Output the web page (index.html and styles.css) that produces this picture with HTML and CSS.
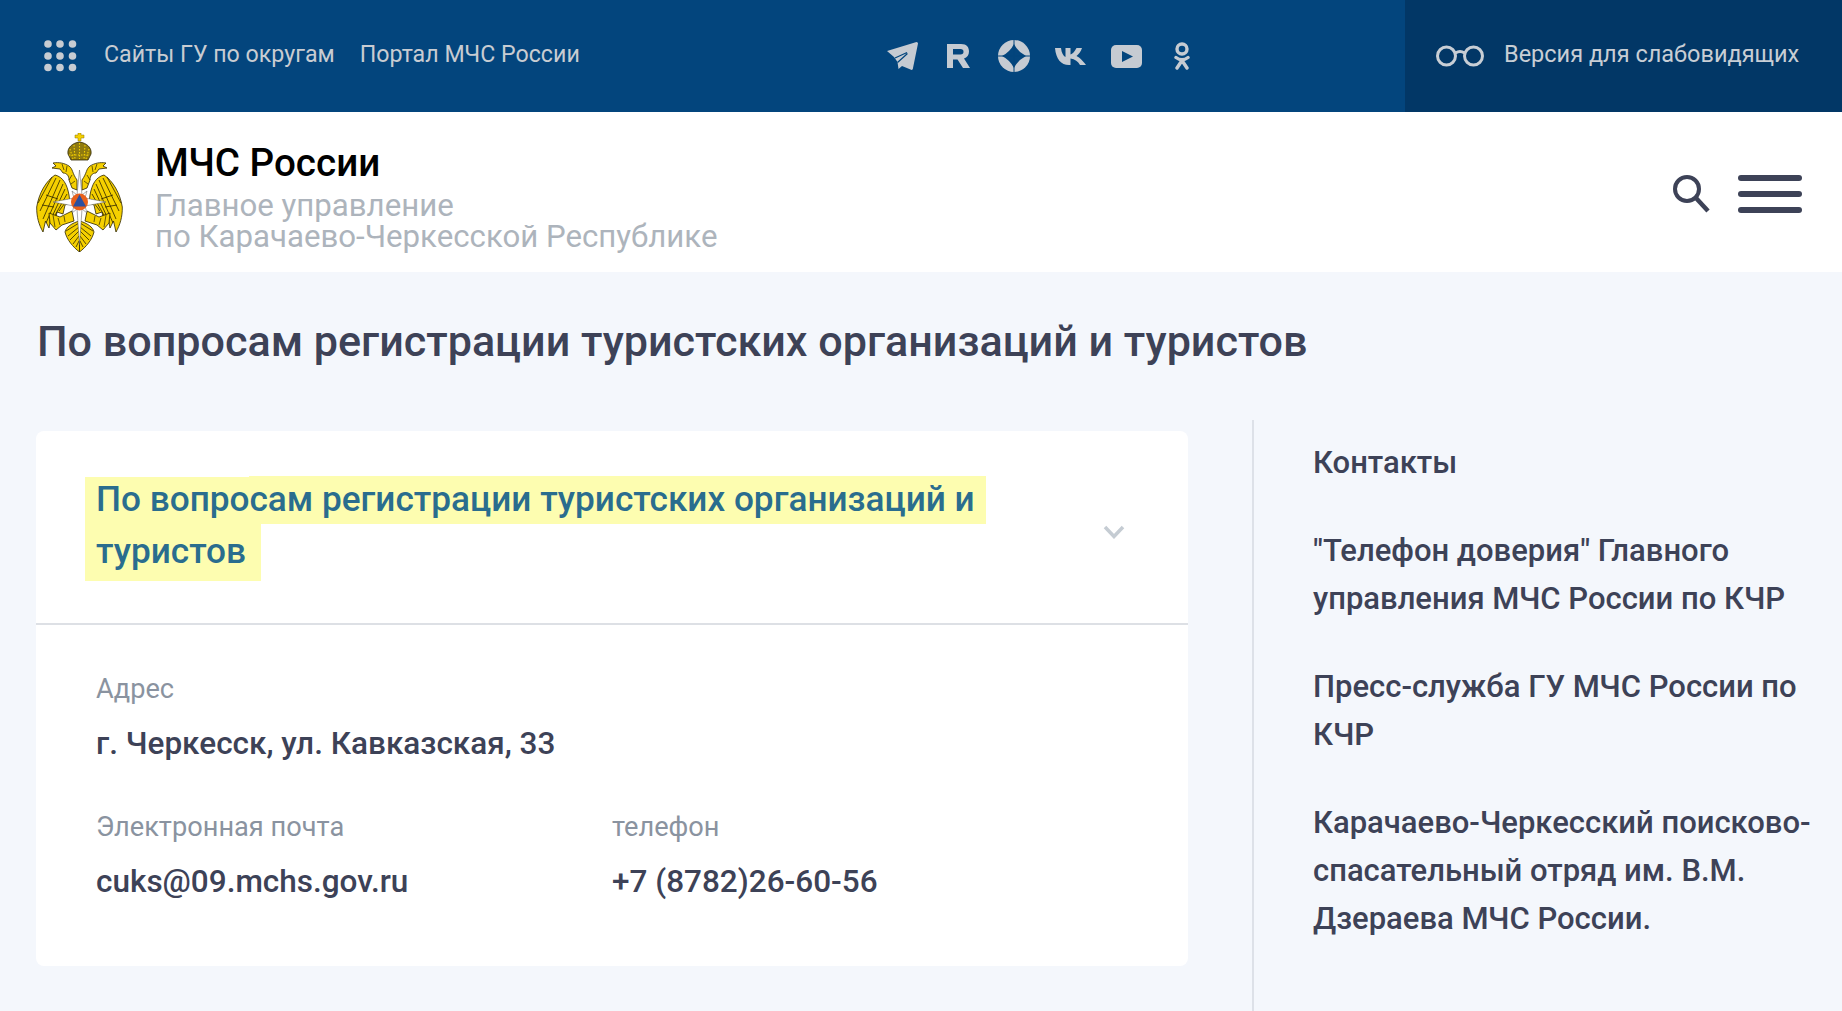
FILE: index.html
```html
<!DOCTYPE html>
<html lang="ru">
<head>
<meta charset="utf-8">
<title>По вопросам регистрации туристских организаций и туристов</title>
<link rel="stylesheet" href="styles.css">
</head>
<body>
<div class="topbar">
  <div class="topnav">
    <svg class="ico-dots" width="33" height="32" viewBox="0 0 33 32" fill="#c8ccd2"><circle cx="4" cy="4" r="3.8"/><circle cx="16" cy="4" r="3.8"/><circle cx="28.500" cy="4" r="3.800"/><circle cx="4" cy="16" r="3.8"/><circle cx="16" cy="16" r="3.8"/><circle cx="28.500" cy="16" r="3.800"/><circle cx="4" cy="27.500" r="3.800"/><circle cx="16" cy="27.500" r="3.800"/><circle cx="28.500" cy="27.500" r="3.800"/></svg>
    <a class="toplink">Сайты ГУ по округам</a>
    <a class="toplink">Портал МЧС России</a>
  </div>
  <div class="socials">
    <span class="social"><svg width="32" height="28" viewBox="0 0 32 28"><path fill="#c6cbd2" d="M1 9 30.500 0Q32 0 32 1.500L26.800 27Q26 28.500 24.500 27.500L16 24 12.500 27 11.500 20 8 15Z"/><path fill="none" stroke="#03457d" stroke-width="1.200" d="M21 10.500 9 16M21.500 11.500 11.500 20.500"/></svg></span>
    <span class="social"><svg width="23" height="24" viewBox="0 0 23 24"><path fill="#c6cbd2" fill-rule="evenodd" d="M0 0H14C20 0 22 3.500 22 7.500 22 11 20 13.500 17 14.500L23 24H16L10.500 15.500H6V24H0ZM6 5V10.500H13.500C15.500 10.500 16.500 9.500 16.500 7.700 16.500 6 15.500 5 13.500 5Z"/></svg></span>
    <span class="social"><svg width="32" height="32" viewBox="0 0 32 32"><circle cx="16" cy="16" r="16" fill="#c6cbd2"/><path fill="#03457d" d="M16 4Q20 12 28 16 20 20 16 28 12 20 4 16 12 12 16 4Z"/><path stroke="#03457d" d="M16 0V32M0 16H32"/></svg></span>
    <span class="social"><svg width="31" height="17" viewBox="0 0 31 17"><path fill="#c6cbd2" d="M0 0H6C6.500 5 8.500 8 10.500 9V0H15.500V6.500C17.500 6 19.500 3.500 21.500 0H27C26 3.500 23.500 6.500 21.500 8 23.500 9 27 11.500 31 17H25C23 13.500 20 11 15.500 10.500V17H14C6 17 1 11 0 0Z"/></svg></span>
    <span class="social"><svg width="31" height="23" viewBox="0 0 31 23"><rect width="31" height="23" rx="5" fill="#c6cbd2"/><path fill="#03457d" d="M11 6 22 11.500 11 17Z"/></svg></span>
    <span class="social"><svg width="16" height="28" viewBox="0 0 16 28" fill="none" stroke="#c6cbd2" stroke-width="3.400" stroke-linecap="round"><circle cx="8" cy="7" r="5"/><path d="M2 15.500Q8 20 14 15.500M8 18.500 3 26M8 18.500 13 26"/></svg></span>
  </div>
  <div class="vision">
    <svg width="48" height="22" viewBox="0 0 48 22" fill="none" stroke="#c8ced5" stroke-width="3"><circle cx="10.500" cy="11" r="9"/><circle cx="37.500" cy="11" r="9"/><path d="M19.500 8Q24 5 28.500 8"/></svg>
    <span class="vision-text">Версия для слабовидящих</span>
  </div>
</div>

<header class="header">
  <div class="brand">
    <svg class="emblem" width="88" height="119" viewBox="0 0 88 119">
      <defs>
        <g id="half">
          <path fill="#f5d000" stroke="#2e2600" stroke-width=".8" d="M33 62C31 51 27 44 19 42 10 48 3 60 .7 74 .5 84 3 92 7 99L9.500 88 13 95 15 84 19 90 21 79 27 81 29 72 34 70Z"/>
          <path fill="none" stroke="#2e2600" stroke-width=".8" d="M16 44 2 70M20 45 4 78M24 47 7 86M27 51 10 90M29 56 14 88M31 61 18 84M32 66 23 78M10 62 22 66M6 72 18 74"/>
          <path fill="#f5d000" stroke="#2e2600" stroke-width=".8" d="M41 47C36 40 37 36 33 33 28 30 23 29 17 30L20 33 16 35 24 36 27 40C31 40 33 43 33 47L36 55 41 57Z"/>
          <path fill="none" stroke="#2e2600" stroke-width=".7" d="M26 31 28 37M31 33 30 39M36 42 33 47M39 48 35 51"/>
          <path fill="#f5d000" stroke="#2e2600" stroke-width=".8" d="M36 78 24 84 13 80 14 90 20 97 26 92 38 88Z"/>
          <path fill="none" stroke="#2e2600" stroke-width=".7" d="M17 82 19 94M22 85 24 92M28 83 29 89"/>
          <path fill="#f5d000" stroke="#2e2600" stroke-width=".8" d="M43.500 88C36 90 30 94 29 99 31 107 37 114 43.500 119Z"/>
          <path fill="none" stroke="#2e2600" stroke-width=".8" d="M43 90 30 98M43 94 32 103M43 98 34 107M43 103 37 111M43 108 40 114"/>
        </g>
      </defs>
      <use href="#half"/>
      <use href="#half" transform="matrix(-1 0 0 1 87 0)"/>
      <path fill="#f5d000" stroke="#8a7300" stroke-width=".5" d="M42 0H45V2H48V5H45V8H42V5H39V2H42Z"/>
      <path fill="#8f7a10" stroke="#2e2600" stroke-width=".8" d="M43.500 9C36 10 31 15 32 21L35 27H52L55 21C56 15 51 10 43.500 9Z"/>
      <path fill="none" stroke="#f5d000" stroke-width="1.100" stroke-dasharray="1.500 1.500" d="M43.500 10V26M38 12 39 26M49 12 48 26M34 16 37 26M53 16 50 26M33 22H54"/>
      <path fill="#fff" stroke="#555" stroke-width=".5" d="M43.500 37 46 62 51 58 49 65 70 69 49 73 51 80 46 76 43.500 112 41 76 36 80 38 73 17 69 38 65 36 58 41 62Z"/>
      <circle cx="43.500" cy="69" r="8.500" fill="#e8601a"/>
      <path fill="#2a4fa0" d="M43.500 61.500 50 73.500H37Z"/>
    </svg>
    <div class="brand-text">
      <div class="brand-name">МЧС России</div>
      <div class="brand-sub">Главное управление<br>по Карачаево-Черкесской Республике</div>
    </div>
  </div>
  <div class="tools">
    <svg width="37" height="38" viewBox="0 0 37 38" fill="none" stroke="#3d4257"><circle cx="14" cy="14" r="12" stroke-width="4"/><path stroke-width="4.500" d="M23 23 35 36"/></svg>
    <div class="burger"><span></span><span></span><span></span></div>
  </div>
</header>

<main class="main">
  <h1 class="page-title">По вопросам регистрации туристских организаций и туристов</h1>
  <div class="columns">
    <section class="card">
      <div class="card-head">
        <div class="card-title">
          <span class="hl hl-first">По вопросам регистрации туристских организаций и</span>
          <span class="hl hl-second">туристов</span>
        </div>
        <svg class="chevron" width="22" height="14" viewBox="0 0 22 14" fill="none" stroke="#c5ccd3" stroke-width="3.500"><path d="M2 2 11 11.500 20 2"/></svg>
      </div>
      <div class="card-body">
        <div class="field">
          <div class="label">Адрес</div>
          <div class="value">г. Черкесск, ул. Кавказская, 33</div>
        </div>
        <div class="field-row">
          <div class="field">
            <div class="label">Электронная почта</div>
            <div class="value">cuks@09.mchs.gov.ru</div>
          </div>
          <div class="field">
            <div class="label">телефон</div>
            <div class="value">+7 (8782)26-60-56</div>
          </div>
        </div>
      </div>
    </section>
    <nav class="side">
      <a class="side-link">Контакты</a>
      <a class="side-link">"Телефон доверия" Главного управления МЧС России по КЧР</a>
      <a class="side-link">Пресс-служба ГУ МЧС России по КЧР</a>
      <a class="side-link">Карачаево-Черкесский поисково-спасательный отряд им. В.М. Дзераева МЧС России.</a>
    </nav>
  </div>
</main>
</body>
</html>
```
FILE: styles.css
```css
* { box-sizing: border-box; }
html, body { margin: 0; padding: 0; }
body {
  font-family: Roboto, "Liberation Sans", sans-serif;
  background: #f4f7fc;
  color: #3d4257;
  overflow: hidden;
  height: 1011px;
}
.topbar {
  height: 112px;
  background: #03457d;
  display: flex;
  align-items: center;
}
.topnav {
  display: flex;
  align-items: center;
  padding-left: 44px;
  width: 874px;
  flex: none;
}
.ico-dots { margin-right: 27px; flex: none; }
.toplink {
  font-size: 23.200px;
  line-height: 32px;
  color: #c8ccd2;
  margin-right: 25px;
  margin-bottom: 4px;
  white-space: nowrap;
}
.socials {
  display: flex;
  align-items: center;
  flex: none;
  width: 531px;
  height: 112px;
}
.social {
  width: 56px;
  display: flex;
  align-items: center;
  justify-content: center;
}
.vision {
  flex: 1;
  height: 112px;
  background: #023766;
  display: flex;
  align-items: center;
  padding-left: 31px;
  gap: 20px;
}
.vision-text {
  font-size: 23.500px;
  line-height: 32px;
  margin-bottom: 4px;
  color: #c8ced5;
  white-space: nowrap;
}
.header {
  height: 160px;
  background: #fff;
  display: flex;
  align-items: center;
  justify-content: space-between;
  padding: 1px 40px 0 36px;
}
.brand { display: flex; align-items: center; gap: 31px; }
.emblem { flex: none; }
.brand-text { margin-top: 8px; }
.brand-name {
  font-size: 38.600px;
  font-weight: 500;
  line-height: 44px;
  color: #000;
}
.brand-sub {
  font-size: 31.200px;
  line-height: 30.500px;
  margin-top: 6px;
  color: #adb4bc;
}
.tools { display: flex; align-items: center; gap: 28px; margin-top: 2px; }
.burger { width: 64px; display: flex; flex-direction: column; gap: 10px; }
.burger span { display: block; height: 6px; border-radius: 3px; background: #3d4257; }
.main { padding: 46px 0 0 36px; }
.page-title {
  margin: 0 0 54px 1px;
  font-size: 43.100px;
  line-height: 48px;
  font-weight: 500;
  color: #3d4257;
}
.columns { display: flex; align-items: stretch; }
.card {
  width: 1152px;
  height: 535px;
  margin-top: 11px;
  margin-bottom: 45px;
  background: #fff;
  border-radius: 8px;
  flex: none;
}
.card-head {
  height: 194px;
  border-bottom: 2px solid #dde0e5;
  display: flex;
  justify-content: space-between;
  align-items: center;
  padding: 0 63px 0 49px;
}
.card-title {
  align-self: flex-start;
  margin-top: 45px;
  font-size: 35.200px;
  font-weight: 500;
  color: #2a6d8e;
}
.hl {
  display: block;
  width: fit-content;
  padding: 0 11px;
  background: linear-gradient(#fff, #fff) 0 0 / 164px 1px no-repeat, #fdfdb0;
}
.hl-first { height: 48px; line-height: 47px; }
.hl-second { height: 57px; line-height: 55px; background: #fdfdb0; padding: 0 15px 0 11px; }
.chevron { margin-top: 10px; flex: none; }
.card-body { padding: 48px 60px 0; }
.label { font-size: 27.200px; line-height: 32px; color: #8a93a0; margin-bottom: 19px; }
.value { font-size: 31.500px; line-height: 40px; font-weight: 500; color: #3d4257; }
.field-row { display: grid; grid-template-columns: 516px 1fr; margin-top: 47px; }
.side {
  flex: 1;
  margin-left: 64px;
  border-left: 2px solid #dde1e8;
  padding: 19px 28px 0 59px;
  display: flex;
  flex-direction: column;
  gap: 40px;
}
.side-link { font-size: 31px; line-height: 48px; font-weight: 500; color: #3d4257; }
```
